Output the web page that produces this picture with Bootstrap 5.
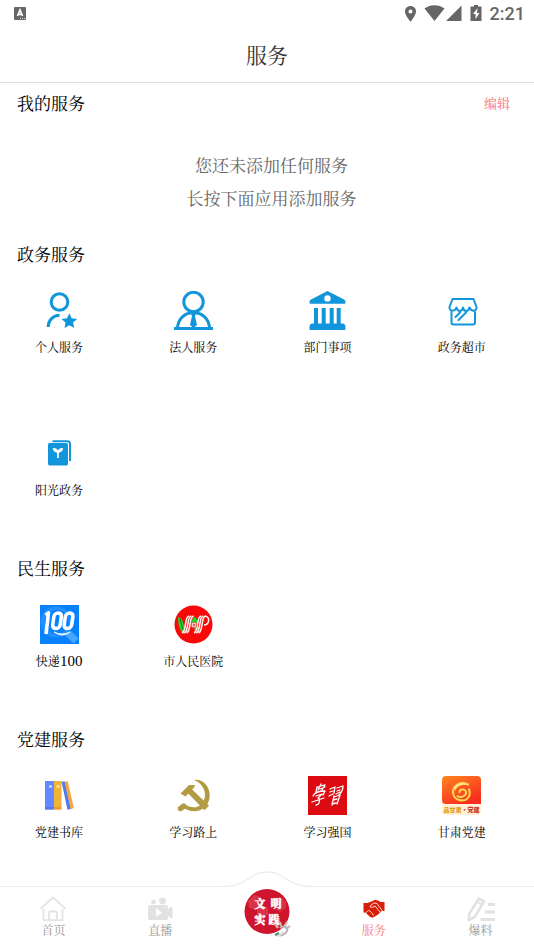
<!DOCTYPE html>
<html lang="zh-CN">
<head>
<meta charset="utf-8">
<meta name="viewport" content="width=device-width, initial-scale=1">
<title>服务</title>
<link href="https://cdn.jsdelivr.net/npm/bootstrap@5.3.0/dist/css/bootstrap.min.css" rel="stylesheet">
<style>
body{font-family:"Noto Serif CJK SC","Noto Serif SC","Noto Sans CJK SC",serif;color:#000;background:#fff}
a{color:inherit;text-decoration:none}
svg{display:block;flex:none}
.status-bar{height:28px;padding:0 9px 0 13px;color:#666}
.clock{font:500 18px/28px Roboto,sans-serif;margin-left:6px}
.page-title{font-size:21px;line-height:52px;padding-bottom:2px;font-weight:400;color:#333;border-bottom:1px solid #dcdcdc}
.section-head{padding:0 24px 0 17px;height:40px}
.section-head h2{font-size:17px;line-height:24px;font-weight:400}
.edit{font-size:13px;line-height:20px;color:#f96f73}
.hint{padding:25px 0 20px 9px;font-size:17px;line-height:33px;color:#666}
.services{padding:17px 29px 49px 16px}
.services .row{--bs-gutter-x:48px;row-gap:78px}
.service{font-size:12px;line-height:18px;gap:8px;white-space:nowrap}
.digits{font-family:"Liberation Serif",serif;font-size:15px}
.last-group .services{padding-bottom:24px}
.tabs{border-top:1px solid #ededed;background:#fff}
.tab-item{flex:1 1 0;padding:8px 0 11px;font-size:12px;line-height:18px;color:#999}
.tab-item.current{color:#f97c80}
.bump{position:absolute;top:-17px;left:50%;transform:translateX(-50%)}
.center-tab{flex:1 1 0}
</style>
<script src="https://cdn.jsdelivr.net/npm/bootstrap@5.3.0/dist/js/bootstrap.bundle.min.js"></script>
</head>
<body>
<div class="min-vh-100 d-flex flex-column">
<header>
  <div class="status-bar d-flex align-items-center justify-content-between">
    <svg width="14" height="14" viewBox="0 0 14 14"><rect x="1" y="0" width="12" height="13" rx="1" fill="#666"/><path d="M4.500 9 7 3l2.500 6M5 7.500h4" fill="none" stroke="#fff" stroke-width="1.700"/><path d="M7 11.500h5" stroke="#ddd" stroke-dasharray="1 1"/></svg>
    <div class="d-flex align-items-center">
      <svg width="82" height="20" viewBox="402 4 82 20" fill="#666"><path fill-rule="evenodd" d="M410.500 6c-3.200 0-5.500 2.300-5.500 5.500 0 4 5.500 10.200 5.500 10.200s5.500-6.200 5.500-10.200c0-3.200-2.300-5.500-5.500-5.500zm0 7.400a2 2 0 1 1 0-4 2 2 0 0 1 0 4z"/><path d="M424.500 8.500C430 4 439 4 444.500 8.500L434.500 21zM461.500 5.500V21H446zM474 5h4v1.500h3.500V21h-11V6.500h3.500z"/><path d="m477.500 8-4.500 6h2.500v5l4-6H477z" fill="#fff"/></svg>
      <span class="clock">2:21</span>
    </div>
  </div>
  <h1 class="page-title text-center m-0">服务</h1>
</header>

<main>
  <section>
    <div class="section-head d-flex align-items-center justify-content-between"><h2 class="m-0">我的服务</h2><button type="button" class="edit btn p-0 border-0">编辑</button></div>
    <p class="hint text-center m-0">您还未添加任何服务<br>长按下面应用添加服务</p>
  </section>

  <section>
    <div class="section-head d-flex align-items-center"><h2 class="m-0">政务服务</h2></div>
    <div class="services"><div class="row row-cols-4">
      <div class="col"><a href="#" class="service d-flex flex-column align-items-center">
        <svg width="39" height="39" viewBox="0 0 39 39" fill="none" stroke="#1296db" stroke-width="3"><circle cx="19.500" cy="11" r="8.300"/><path d="M8.200 36c0-7 5-11.500 11.300-11.800"/><path d="m29.300 22.300 2.300 5 5.500.6-4 3.700 1.100 5.400-4.900-2.700-4.800 2.700 1-5.400-4-3.700 5.500-.6z" fill="#1296db" stroke="none"/></svg>
        <span>个人服务</span></a></div>
      <div class="col"><a href="#" class="service d-flex flex-column align-items-center">
        <svg width="39" height="39" viewBox="0 0 39 39" fill="none" stroke="#1296db" stroke-width="3"><circle cx="19.500" cy="11" r="9.700"/><path d="M3.500 36.500C4.500 27 11 21.800 19.500 21.800S34.500 27 35.500 36.500M0 37.400h39"/><path d="M17 22h5l-1 3 2 9-3.500 3-3.500-3 2-9z" fill="#1296db" stroke="none"/></svg>
        <span>法人服务</span></a></div>
      <div class="col"><a href="#" class="service d-flex flex-column align-items-center">
        <svg width="39" height="39" viewBox="0 0 39 39" fill="#1296db"><path fill-rule="evenodd" d="M18.500.4q1-.6 2 0L36 8.500q1.500.8 1.500 2v1.300q0 1-1 1h-34q-1 0-1-1v-1.300q0-1.200 1.500-2zM19.500 4.200a3.200 3.200 0 1 0 0 6.400 3.200 3.200 0 0 0 0-6.400z"/><path d="M6 17h4v15.500h3.700V17h4v15.500h4V17h4v15.500h3V17h4v15.500h2.800q2 1 2 3V38q0 1-1 1h-34q-1 0-1-1v-2.500q0-2 2-3H6z"/></svg>
        <span>部门事项</span></a></div>
      <div class="col"><a href="#" class="service d-flex flex-column align-items-center">
        <svg width="39" height="39" viewBox="0 0 39 39" fill="none" stroke="#1296db" stroke-width="2" stroke-linecap="round" stroke-linejoin="round"><path d="M10.500 8H31.500L34.500 16c.5 4.500-5 5-7 .5-1 4.500-5.600 4.500-6.500 0-1 4.500-5.500 4.500-6.500 0-1.500 4.500-7.600 4-7-.5z"/><path d="M9.500 21v10.500q0 2 2 2h19.500q2 0 2-2V21M18 21.500l-4.500 4.500M24 21.500 16.500 29"/></svg>
        <span>政务超市</span></a></div>
      <div class="col"><a href="#" class="service d-flex flex-column align-items-center">
        <svg width="39" height="39" viewBox="0 0 39 39"><path d="M12.500 7.300h15q2.500 0 2.500 2.500V27" fill="none" stroke="#1296db" stroke-width="2"/><rect x="8" y="9" width="20" height="22.500" rx="1.700" fill="#1296db"/><path d="M17 24v-5.500c-2 0-4.200-1.700-4.200-4.500 2.500-.3 4.500.6 5.200 2.500.7-1.900 2.500-2.800 5-2.500 0 2.800-2 4.500-4.200 4.500V24z" fill="#fff"/></svg>
        <span>阳光政务</span></a></div>
    </div></div>
  </section>

  <section>
    <div class="section-head d-flex align-items-center"><h2 class="m-0">民生服务</h2></div>
    <div class="services"><div class="row row-cols-4">
      <div class="col"><a href="#" class="service d-flex flex-column align-items-center">
        <svg width="39" height="39" viewBox="0 0 39 39"><path fill="#0882fc" d="M0 0h39v39H0z"/><circle cx="16" cy="17" r="15.500" fill="#2390ff"/><circle cx="17" cy="17" r="12" fill="#0882fc"/><path d="m28 28 8 8" stroke="#48a5ff" stroke-width="7"/><g fill="none" stroke="#fff" stroke-width="3.600" stroke-linejoin="round"><path d="m5.500 10 3-2L6 29"/><rect x="15.500" y="8" width="7.500" height="15.500" rx="3.700" transform="skewX(-8)"/><rect x="27" y="8" width="7.500" height="15.500" rx="3.700" transform="skewX(-8)"/></g><path d="M14 27q8 4 16 0-7 6-16 0z" fill="#fff" stroke="#fff" stroke-width=".8"/></svg>
        <span>快递<span class="digits">100</span></span></a></div>
      <div class="col"><a href="#" class="service d-flex flex-column align-items-center">
        <svg width="39" height="39" viewBox="0 0 39 39"><circle cx="19.500" cy="19.500" r="19" fill="#f80808"/><path d="M4 12q7 2 6 17-6-4-6-17zM18 15q3-6 5 0l1 10q-7 0-6-10z" fill="#20d62b"/><g fill="none" stroke="#fff5ee" stroke-width="1.600"><path d="M15 11c-5 1-2 15-7 17M17.300 11c-5 1-2 15-7 17M19.600 11c-5 1-2 15-7 17M27 11c-5 1-2 15-7 17M29.300 11c-5 1-2 15-7 17M31.600 11c-5 1-2 15-7 17M31 11c6 1 4 9-1 9"/></g><path d="m6 14 3 11" stroke="#087e17"/><circle cx="20" cy="20" r="2.800" fill="#fff" stroke="#e05050"/><path d="M18.500 20h3M20 18.500v3" stroke="#e22"/></svg>
        <span>市人民医院</span></a></div>
    </div></div>
  </section>

  <section class="last-group">
    <div class="section-head d-flex align-items-center"><h2 class="m-0">党建服务</h2></div>
    <div class="services"><div class="row row-cols-4">
      <div class="col"><a href="#" class="service d-flex flex-column align-items-center">
        <svg width="39" height="39" viewBox="0 0 39 39"><path fill="#6488ff" d="M5 5h9v28.500H5z"/><path fill="#f0b338" d="M14 5h7.500v28.500H14z"/><path fill="#f5863a" d="M13.500 31h8v2.500h-8z" opacity=".65"/><path fill="#5478ee" d="M5 31h8.500v2.500H5z"/><path fill="#507aef" d="m21.500 5.500 3.500.3L31 33l-3.500.8z"/><path fill="#faa43c" d="m24.500 5.500 3.200-.3L33.800 32l-3 1.300z"/><path d="M9 10.500h3M16.500 10.500h3" stroke="#fff" stroke-width="1.800" opacity=".8"/></svg>
        <span>党建书库</span></a></div>
      <div class="col"><a href="#" class="service d-flex flex-column align-items-center">
        <svg width="39" height="39" viewBox="0 0 39 39" fill="#b39b43"><path d="M20 4c10-1.500 16 7.500 15.700 16-.1 4-1.500 7.500-4 10.300-6 6.500-16 6.600-22.700.7l2-2.500c6 4 12.500 3.500 16.500-.3C34 21 31.500 8.500 20 4z"/><path d="M6.500 17.500 15 9h6l-.5 2-2.300 2.500L35 29.700l-4.500 4.500L14.300 17.500 11.500 20.500z"/><circle cx="6.500" cy="32.500" r="2.700"/><path d="m6 29 4-2 3.500 3-4 4z"/></svg>
        <span>学习路上</span></a></div>
      <div class="col"><a href="#" class="service d-flex flex-column align-items-center">
        <svg width="39" height="39" viewBox="0 0 39 39"><path fill="#dc0b12" d="M0 0h39v39H0z"/><g fill="none" stroke="#fff" stroke-linecap="round" stroke-linejoin="round" stroke-width="1.300"><path d="m9 11-1 5M13 8l-3 6M17 9l-3 5M10 11l6-2M12 13l5-2M5 20c2-4 8-5 12-5l-2 4M8 20l6-2-4 4M4 26l12-4M11 22c1 4 0 7-3 7M22 13l5-2-1 6M22 16l3-1M21 20l4-2M29 12l6-2c0 4-2 7-4 9M29 15l3-1M28 18l4-2M26 20l-2 9M26 21l6-2-3 9M25 24l4-1M24 28l4-1"/></g></svg>
        <span>学习强国</span></a></div>
      <div class="col"><a href="#" class="service d-flex flex-column align-items-center">
        <svg width="39" height="39" viewBox="0 0 39 39"><defs><linearGradient id="warm" x1="0" y1="0" x2=".6" y2="1"><stop stop-color="#ff8520"/><stop offset="1" stop-color="#f72d20"/></linearGradient></defs><rect width="39" height="39" rx="4" fill="#fff0d8"/><path d="M4 0h31q4 0 4 4v24H4q-4 0-4-4V4q0-4 4-4z" fill="url(#warm)"/><g fill="none" stroke="#ffd44e" stroke-linecap="round"><path d="M26 8.500C19 5 10.500 9 11 16.500c.5 9 14 11 16.500 2.500.5-2 .3-4-.5-5.500" stroke-width="2.200"/><path d="M15.500 20c4 3 9.500-1 8.500-4.500-1.500-3.500-7-2-6.500 1" stroke-width="2"/></g><path d="M12 12c3-5 9-6 14-3-7-1-11 1-13 6z" fill="#ffe88d"/><text x="19.500" y="36" text-anchor="middle" font-family="Noto Sans CJK SC" font-weight="900" font-size="6" fill="#e39a0b">品甘肃<tspan fill="#c53124">·党建</tspan></text></svg>
        <span>甘肃党建</span></a></div>
    </div></div>
  </section>
</main>

<nav class="tabs mt-auto position-relative" aria-label="主导航">
  <svg class="bump" width="90" height="20" viewBox="0 0 90 20"><path d="M0 16.500C26 16.500 27 2 45 2s19 14.500 45 14.500V20H0z" fill="#fff"/><path d="M0 16.500C26 16.500 27 2 45 2s19 14.500 45 14.500" fill="none" stroke="#e8e8e8"/></svg>
  <div class="d-flex position-relative">
    <a href="#" class="tab-item d-flex flex-column align-items-center">
      <svg width="26" height="26" viewBox="0 0 26 26" fill="none" stroke="#e3e3e3" stroke-width="1.800" stroke-linejoin="round"><path d="M.8 13.500 13 2.300l12.200 11.200M3.500 14v10.500q0 .7.7.7h17.600q.7 0 .7-.7V14M9 25v-7q0-1.500 1.500-1.500h5Q17 16.500 17 18v7"/></svg>首页</a>
    <a href="#" class="tab-item d-flex flex-column align-items-center">
      <svg width="26" height="26" viewBox="0 0 26 26" fill="#e2e2e2"><circle cx="6.500" cy="7" r="2.400"/><circle cx="15.500" cy="6" r="3.400"/><path fill-rule="evenodd" d="M3 10h16q2 0 2 2v2l3-2h1.500v11H24l-3-2v2q0 2-2 2H3q-2 0-2-2V12q0-2 2-2zm6 3.300v8.400l6-4.200z"/></svg>直播</a>
    <a href="#" class="center-tab d-flex justify-content-center" aria-label="文明实践">
      <svg width="48" height="52" viewBox="0 0 48 52"><circle cx="24" cy="24.500" r="22.500" fill="#cf142d"/><path d="m5 14 6-6 7 2 2 8-6 5-8-2zM14 22l5-4 6 3v7l-6 3-5-3zM31 14l5-4 7 4v7l-6 4-6-4z" fill="#e5616b" opacity=".4"/><g font-family="Noto Serif CJK SC,Noto Sans CJK SC,serif" font-weight="900" font-size="11" fill="#fff" stroke="#fff" stroke-width=".5" text-anchor="middle"><text x="17" y="21">文</text><text x="33" y="21">明</text><text x="17" y="37">实</text><text x="31" y="37">践</text></g><g fill="none" stroke-width="2.200"><path d="m35 41-3-4M38 39l-1-4M41 40l3-5M43 42l4-3" stroke="#d7bcae"/><path d="M37 41c3-3 8-1 7 3-1 3-6 5-9 4" stroke="#b8b7bd"/><path d="M32 48c4 1 7-1 8-4" stroke="#e6dddc"/><path d="m32 48 4-2" stroke="#479b83"/></g></svg></a>
    <a href="#" class="tab-item current d-flex flex-column align-items-center" aria-current="page">
      <svg width="26" height="26" viewBox="0 0 26 26"><path d="M2.500 8h4l4-1.500 3-1.500q3-.5 6 2h4v9h-3l-4 4-4 2.300q-2 .7-4-.8l-4-4h-2z" fill="#d81e06"/><path d="m10 10 3-2 3 .5 5.500 7.500M10 10l-1 2q3 1 5-1l5 6M5 17.500l2.500-2 2 1 1.500 1.500 1.500 2.500" fill="none" stroke="#fff" stroke-width=".8"/></svg>服务</a>
    <a href="#" class="tab-item d-flex flex-column align-items-center">
      <svg width="28" height="26" viewBox="0 0 28 26" fill="none" stroke="#e2e2e2" stroke-width="2.600"><path d="m2.200 19 9.500-15.500 5.300 3L7.800 22l-6 3z"/><path d="m10 6.500 5 3" stroke-width="1.800"/><path d="M21 9.500h7M18 17h10M13.500 24.500H28" stroke-width="2.800"/></svg>爆料</a>
  </div>
</nav>
</div>
</body>
</html>
